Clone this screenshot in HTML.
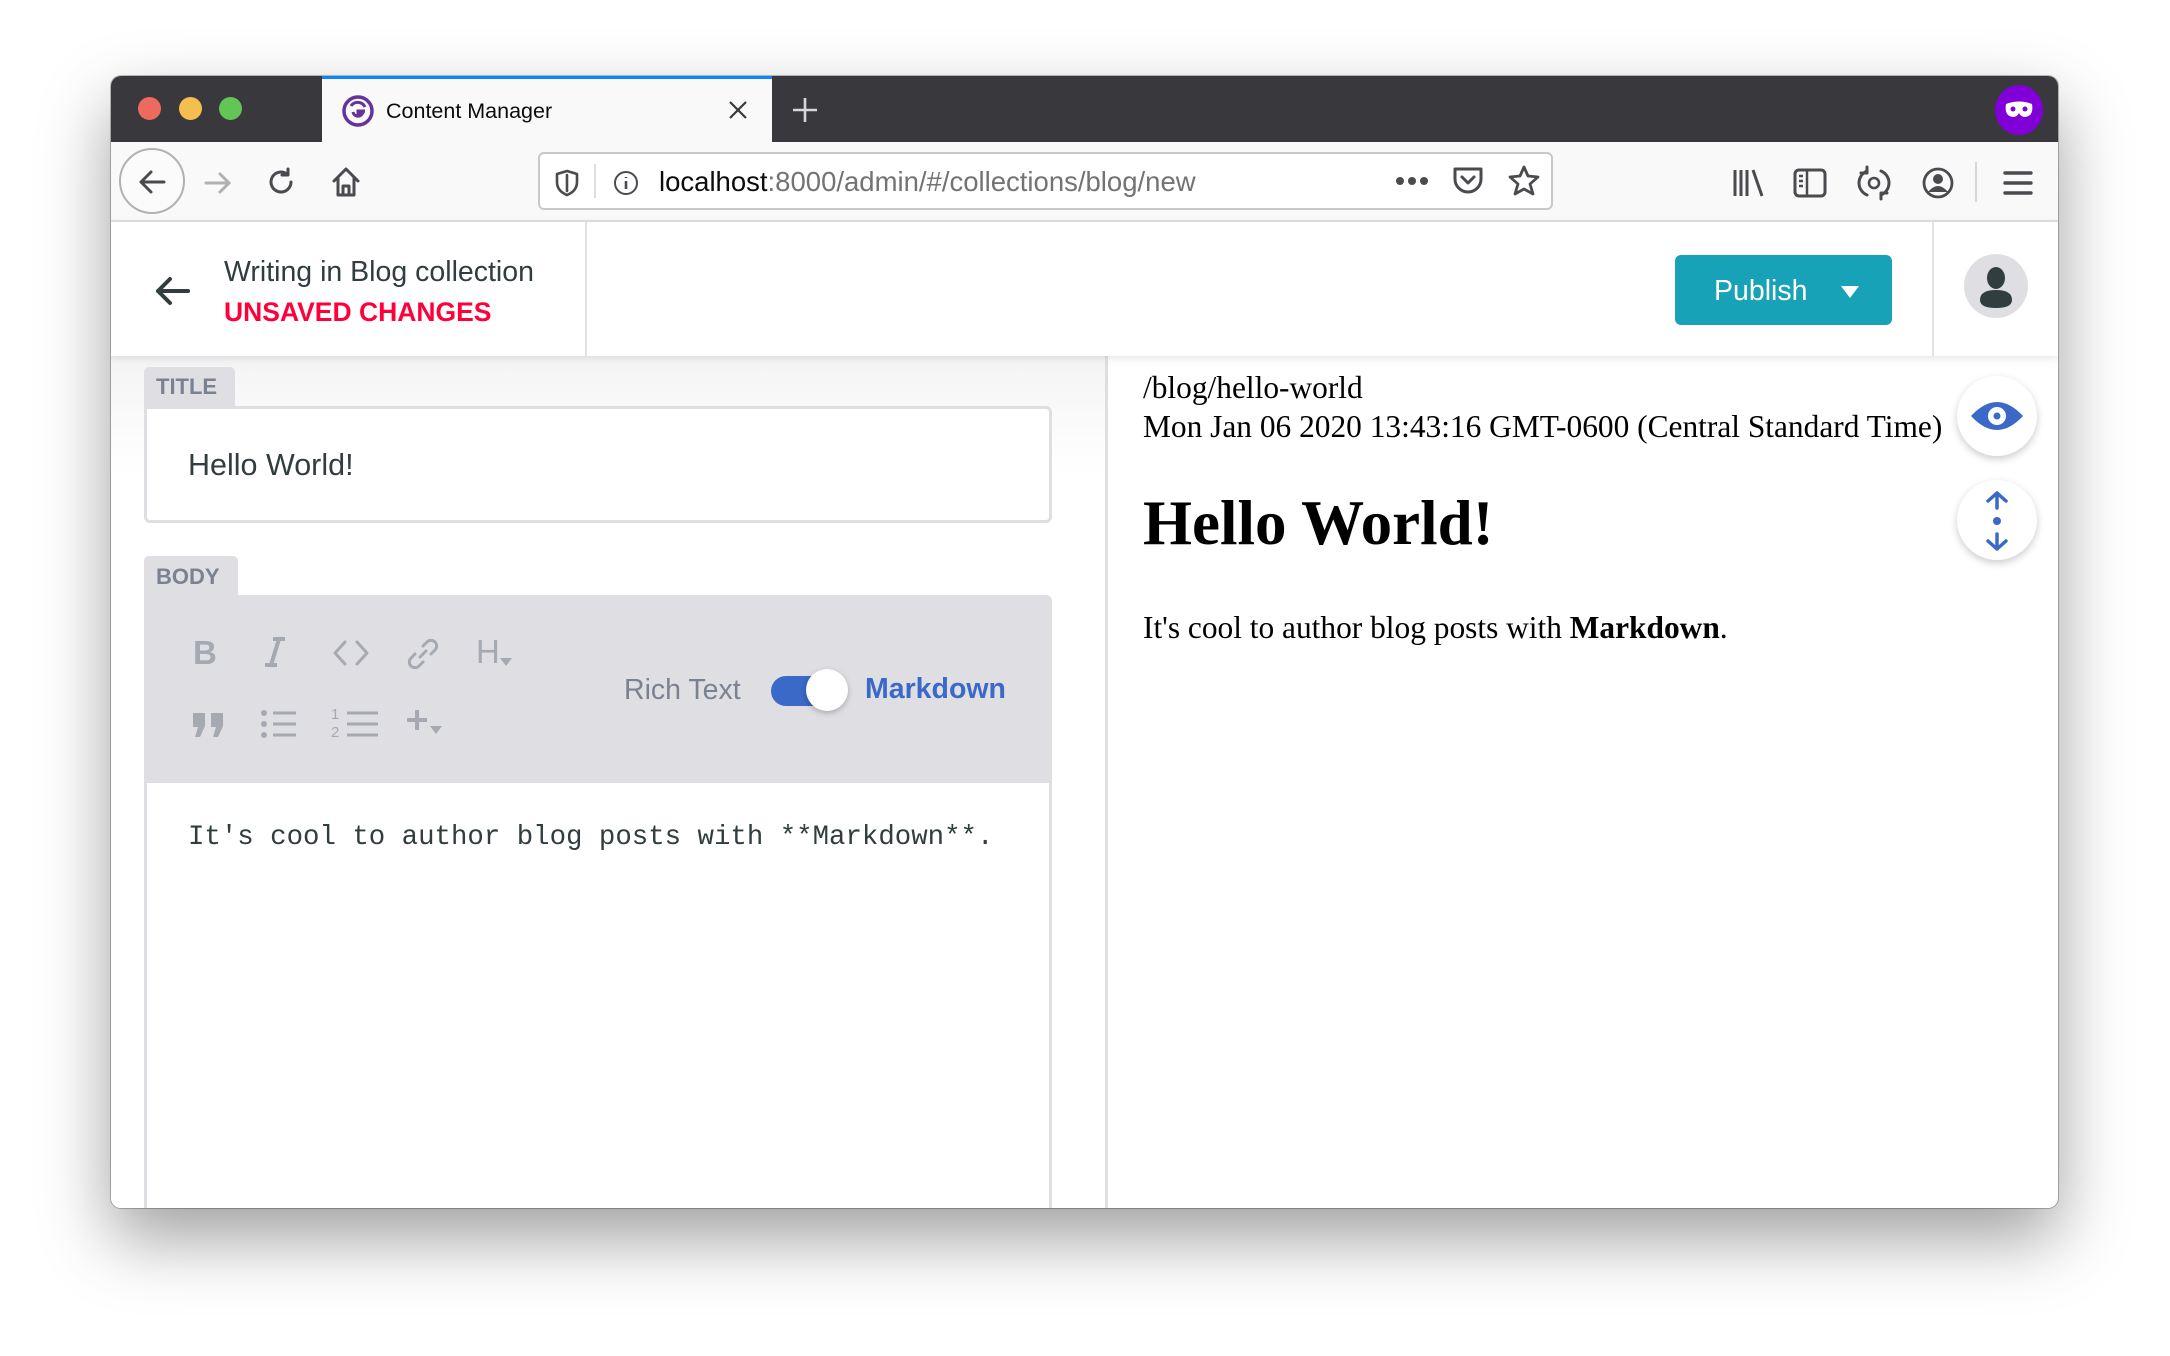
<!DOCTYPE html>
<html><head><meta charset="utf-8"><style>
*{box-sizing:border-box;margin:0;padding:0}
body{width:2170px;height:1356px;background:#fff;position:relative;overflow:hidden;font-family:"Liberation Sans",sans-serif}
.a{position:absolute}
#win{left:111px;top:76px;width:1947px;height:1132px;border-radius:10px;overflow:hidden;background:#fff;box-shadow:0 30px 70px rgba(0,0,0,.38),0 0 0 1px rgba(0,0,0,.25)}
.ic{stroke:#4a4a4f;fill:none;stroke-width:2.6;stroke-linecap:round;stroke-linejoin:round}
.tb{stroke:#a5a9b2;fill:none;stroke-width:3;stroke-linecap:round;stroke-linejoin:round}
</style></head><body>
<div id="win" class="a">
 <div class="a" style="left:0;top:0;width:1947px;height:66px;background:#38383d"></div>
 <div class="a" style="left:27px;top:21px;width:23px;height:23px;border-radius:50%;background:#ee6a5e"></div>
 <div class="a" style="left:68px;top:21px;width:23px;height:23px;border-radius:50%;background:#f5bf4f"></div>
 <div class="a" style="left:108px;top:21px;width:23px;height:23px;border-radius:50%;background:#62c555"></div>
 <div class="a" style="left:211px;top:0;width:450px;height:66px;background:#f9f9fa;border-top:3px solid #0a84ff"></div>
 <svg class="a" style="left:231px;top:19px" width="32" height="32" viewBox="0 0 32 32"><circle cx="16" cy="16" r="14" fill="none" stroke="#663399" stroke-width="3.5"/><path d="M23 16h-7v3h4a5 5 0 0 1-9-2M9 11a8 8 0 0 1 14 1" fill="none" stroke="#663399" stroke-width="3"/></svg>
 <div class="a" style="left:275px;top:23px;font-size:21.5px;color:#0c0c0d">Content Manager</div>
 <svg class="a" style="left:617px;top:24px" width="20" height="20"><path d="M2 2L18 18M18 2L2 18" stroke="#38383d" stroke-width="2.2"/></svg>
 <svg class="a" style="left:680px;top:20px" width="28" height="28"><path d="M14 2V26M2 14H26" stroke="#d7d7db" stroke-width="2.6"/></svg>
 <div class="a" style="left:1884px;top:9px;width:48px;height:50px;border-radius:50%;background:#8000d7"></div>
 <svg class="a" style="left:1892px;top:22px" width="32" height="24" viewBox="0 0 32 24"><path d="M3 6Q16 1 29 6Q31 18 22 19Q18 19 16 15Q14 19 10 19Q1 18 3 6Z" fill="#fff"/><circle cx="10" cy="11" r="2.5" fill="#8000d7"/><circle cx="22" cy="11" r="2.5" fill="#8000d7"/></svg>
 <div class="a" style="left:0;top:66px;width:1947px;height:80px;background:#f9f9fa;border-bottom:2px solid #e0e0e2"></div>
 <div class="a" style="left:8px;top:72px;width:66px;height:66px;border-radius:50%;border:2px solid #b1b1b3;background:#fbfbfb"></div>
 <svg class="a" style="left:25px;top:90px" width="32" height="32"><path class="ic" d="M28 16H5M15 6L5 16L15 26" style="stroke-width:3"/></svg>
 <svg class="a" style="left:92px;top:92px" width="30" height="30"><path d="M3 15H26M17 6L26 15L17 24" fill="none" stroke="#b1b1b3" stroke-width="3" stroke-linecap="round"/></svg>
 <svg class="a" style="left:156px;top:91px" width="30" height="30"><path class="ic" d="M24 15A10 10 0 1 1 20 7M21 2V8H15" style="stroke-width:3"/></svg>
 <svg class="a" style="left:219px;top:89px" width="32" height="34"><path class="ic" d="M4 16L16 4L28 16M8 13V30H24V13M13 30V21H19V30" style="stroke-width:3"/></svg>
 <div class="a" style="left:427px;top:76px;width:1015px;height:58px;background:#fff;border:2px solid #c8c8cb;border-radius:6px"></div>
 <svg class="a" style="left:444px;top:93px" width="24" height="28"><path class="ic" d="M12 2L22 5V13Q22 22 12 26Q2 22 2 13V5Z M12 6V22" style="stroke-width:2.6"/></svg>
 <div class="a" style="left:483px;top:88px;width:2px;height:34px;background:#dedee0"></div>
 <svg class="a" style="left:502px;top:94px" width="26" height="26"><circle class="ic" cx="13" cy="13" r="11" style="stroke-width:2"/><path d="M13 11V19M13 7V8" stroke="#4a4a4f" stroke-width="2.6"/></svg>
 <div class="a" style="left:548px;top:90px;font-size:27.5px;color:#0c0c0d;white-space:nowrap">localhost<span style="color:#737373">:8000/admin/#/collections/blog/new</span></div>
 <svg class="a" style="left:1284px;top:99px" width="34" height="12"><circle cx="5" cy="6" r="4" fill="#4a4a4f"/><circle cx="17" cy="6" r="4" fill="#4a4a4f"/><circle cx="29" cy="6" r="4" fill="#4a4a4f"/></svg>
 <svg class="a" style="left:1341px;top:90px" width="32" height="30"><path class="ic" d="M3 3H29V13A13 13 0 0 1 3 13Z M10 11L16 17L22 11" style="stroke-width:3"/></svg>
 <svg class="a" style="left:1396px;top:88px" width="34" height="34"><path class="ic" d="M17 3L21 12L31 13L23 20L26 30L17 25L8 30L11 20L3 13L13 12Z" style="stroke-width:2.8"/></svg>
 <svg class="a" style="left:1620px;top:90px" width="34" height="34"><path d="M4 4V30M10 4V30M16 4V30M22 4L31 30" stroke="#4a4a4f" stroke-width="3"/></svg>
 <svg class="a" style="left:1682px;top:90px" width="34" height="34"><rect class="ic" x="2" y="4" width="30" height="26" rx="4" style="stroke-width:3"/><path d="M14 4V30M6 10H10M6 15H10M6 20H10" stroke="#4a4a4f" stroke-width="2.5"/></svg>
 <svg class="a" style="left:1746px;top:89px" width="34" height="36"><path class="ic" d="M10 6A13 13 0 0 0 10 30M24 6A13 13 0 0 1 24 30M10 2V8H4M24 34V28H30" style="stroke-width:3"/><circle class="ic" cx="17" cy="18" r="5" style="stroke-width:2.6"/></svg>
 <svg class="a" style="left:1810px;top:90px" width="34" height="34"><circle class="ic" cx="17" cy="17" r="14" style="stroke-width:2.8"/><circle cx="17" cy="13" r="5" fill="#4a4a4f"/><path d="M7 26Q17 14 27 26" fill="#4a4a4f"/></svg>
 <div class="a" style="left:1864px;top:86px;width:2px;height:40px;background:#d7d7db"></div>
 <svg class="a" style="left:1892px;top:93px" width="30" height="28"><path d="M2 4H28M2 14H28M2 24H28" stroke="#4a4a4f" stroke-width="3.4" stroke-linecap="round"/></svg>
 <div class="a" style="left:0;top:146px;width:1947px;height:134px;background:#fff;box-shadow:0 2px 8px rgba(68,74,87,.15);z-index:2">
  <svg class="a" style="left:43px;top:53px" width="36" height="32"><path d="M34 16H4M16 4L4 16L16 28" fill="none" stroke="#313d3e" stroke-width="4" stroke-linecap="round" stroke-linejoin="round"/></svg>
  <div class="a" style="left:113px;top:34px;font-size:28.5px;color:#313d3e">Writing in Blog collection</div>
  <div class="a" style="left:113px;top:75px;font-size:26.5px;font-weight:bold;color:#ff003b">UNSAVED CHANGES</div>
  <div class="a" style="left:474px;top:0;width:2px;height:134px;background:#e3e3e6"></div>
  <div class="a" style="left:1564px;top:33px;width:217px;height:70px;background:#17a2b8;border-radius:6px"></div>
  <div class="a" style="left:1603px;top:53px;font-size:28.5px;color:#fff">Publish</div>
  <svg class="a" style="left:1730px;top:64px" width="18" height="12"><path d="M0 0H18L9 12Z" fill="#fff"/></svg>
  <div class="a" style="left:1821px;top:0;width:2px;height:134px;background:#e3e3e6"></div>
  <div class="a" style="left:1853px;top:32px;width:64px;height:64px;border-radius:50%;background:#dfdfe3"></div>
  <svg class="a" style="left:1853px;top:32px" width="64" height="64"><ellipse cx="32" cy="24" rx="9" ry="11" fill="#313d3e"/><path d="M16 46Q16 36 32 36Q48 36 48 46Q48 54 32 54Q16 54 16 46Z" fill="#313d3e"/></svg>
 </div>
 <div class="a" style="left:0;top:280px;width:994px;height:852px;background:linear-gradient(#f4f4f5,#fff 120px)"></div>
 <div class="a" style="left:994px;top:280px;width:3px;height:852px;background:#dfdfe3"></div>
 <div class="a" style="left:33px;top:291px;width:91px;height:40px;background:#dfdfe3;border-radius:5px 5px 0 0"></div>
 <div class="a" style="left:45px;top:298px;font-size:22px;font-weight:bold;color:#7a8291">TITLE</div>
 <div class="a" style="left:33px;top:330px;width:908px;height:117px;border:3px solid #dfdfe3;border-radius:0 6px 6px 6px;background:#fff"></div>
 <div class="a" style="left:77px;top:372px;font-size:30.5px;color:#313d3e">Hello World!</div>
 <div class="a" style="left:33px;top:480px;width:94px;height:40px;background:#dfdfe3;border-radius:5px 5px 0 0"></div>
 <div class="a" style="left:45px;top:488px;font-size:22px;font-weight:bold;color:#7a8291">BODY</div>
 <div class="a" style="left:33px;top:519px;width:908px;height:190px;background:#dfdfe3;border-radius:0 6px 0 0"></div>
 <div class="a" style="left:33px;top:707px;width:908px;height:430px;border:3px solid #dfdfe3;border-top:none;background:#fff"></div>
 <div class="a" style="left:82px;top:558px;font-size:33px;font-weight:bold;color:#a5a9b2">B</div>
 <svg class="a" style="left:152px;top:560px" width="24" height="32"><path d="M10 3H22M2 29H14M16 3L8 29" stroke="#a5a9b2" stroke-width="4" fill="none"/></svg>
 <svg class="a" style="left:221px;top:562px" width="38" height="30"><path class="tb" d="M13 4L3 15L13 26M25 4L35 15L25 26"/></svg>
 <svg class="a" style="left:295px;top:561px" width="34" height="34"><path class="tb" d="M14 20L20 14M17 9L21 5A5 5 0 0 1 29 13L25 17M17 25L13 29A5 5 0 0 1 5 21L9 17"/></svg>
 <div class="a" style="left:365px;top:557px;font-size:33px;color:#a5a9b2">H</div>
 <svg class="a" style="left:389px;top:582px" width="12" height="8"><path d="M0 0H12L6 8Z" fill="#a5a9b2"/></svg>
 <svg class="a" style="left:81px;top:635px" width="34" height="28"><path d="M1 2H13V15L8 26H3L6 16H1Z M19 2H31V15L26 26H21L24 16H19Z" fill="#a5a9b2"/></svg>
 <svg class="a" style="left:150px;top:634px" width="36" height="28"><circle cx="3" cy="3" r="3" fill="#a5a9b2"/><circle cx="3" cy="14" r="3" fill="#a5a9b2"/><circle cx="3" cy="25" r="3" fill="#a5a9b2"/><path d="M12 3H35M12 14H35M12 25H35" stroke="#a5a9b2" stroke-width="3"/></svg>
 <div class="a" style="left:220px;top:630px;font-size:15px;line-height:18px;color:#a5a9b2">1<br>2</div>
 <svg class="a" style="left:232px;top:634px" width="36" height="28"><path d="M4 3H35M4 14H35M4 25H35" stroke="#a5a9b2" stroke-width="3"/></svg>
 <svg class="a" style="left:295px;top:632px" width="38" height="30"><path d="M11 2V22M1 12H21" stroke="#a5a9b2" stroke-width="4"/><path d="M24 18H36L30 26Z" fill="#a5a9b2"/></svg>
 <div class="a" style="left:513px;top:598px;font-size:28.5px;color:#7a8291">Rich Text</div>
 <div class="a" style="left:660px;top:600px;width:75px;height:30px;border-radius:15px;background:#3a69c7"></div>
 <div class="a" style="left:695px;top:593px;width:42px;height:42px;border-radius:50%;background:#fff;box-shadow:0 2px 6px rgba(0,0,0,.25)"></div>
 <div class="a" style="left:754px;top:597px;font-size:28.5px;font-weight:bold;color:#3a69c7">Markdown</div>
 <div class="a" style="left:77px;top:746px;font-size:27.4px;font-family:'Liberation Mono',monospace;color:#313d3e;white-space:nowrap">It's cool to author blog posts with **Markdown**.</div>
 <div class="a" style="left:1032px;top:292px;font-family:'Liberation Serif',serif;font-size:31.4px;line-height:39px;color:#000;white-space:nowrap">/blog/hello-world<br>Mon Jan 06 2020 13:43:16 GMT-0600 (Central Standard Time)</div>
 <div class="a" style="left:1032px;top:411px;font-family:'Liberation Serif',serif;font-size:63px;font-weight:bold;color:#000">Hello World!</div>
 <div class="a" style="left:1032px;top:534px;font-family:'Liberation Serif',serif;font-size:31.4px;color:#000;white-space:nowrap">It's cool to author blog posts with <b>Markdown</b>.</div>
 <div class="a" style="left:1846px;top:300px;width:80px;height:80px;border-radius:50%;background:#fff;box-shadow:0 3px 8px rgba(0,0,0,.2)"></div>
 <svg class="a" style="left:1858px;top:322px" width="56" height="36"><path d="M2 18Q28 -10 54 18Q28 46 2 18Z" fill="#3a69c7"/><circle cx="28" cy="18" r="9" fill="#fff"/><circle cx="28" cy="18" r="3.5" fill="#3a69c7"/></svg>
 <div class="a" style="left:1846px;top:404px;width:80px;height:80px;border-radius:50%;background:#fff;box-shadow:0 3px 8px rgba(0,0,0,.2)"></div>
 <svg class="a" style="left:1872px;top:414px" width="28" height="62"><path d="M14 3V18M5 11L14 3L23 11M14 44V59M5 51L14 59L23 51" fill="none" stroke="#3a69c7" stroke-width="3.5" stroke-linecap="round" stroke-linejoin="round"/><circle cx="14" cy="31" r="4" fill="#3a69c7"/></svg>
</div>
</body></html>
